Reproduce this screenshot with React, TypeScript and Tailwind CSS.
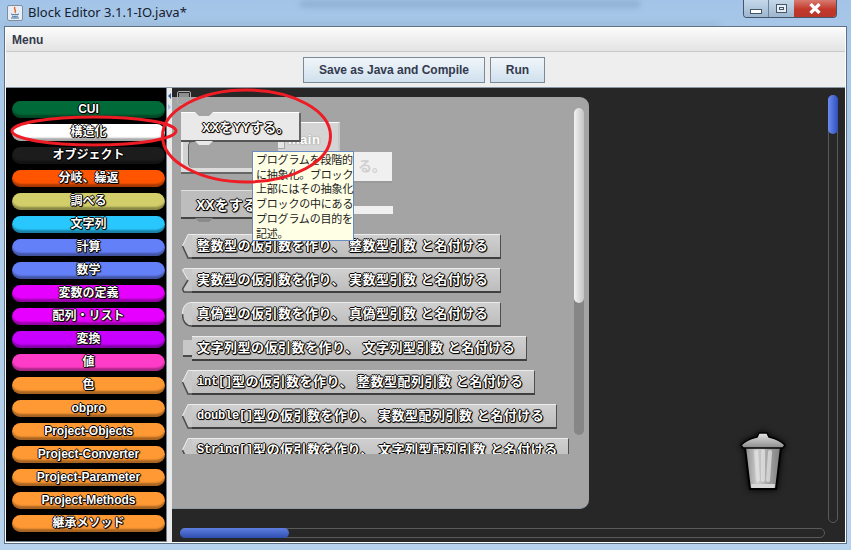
const outline = "[text-shadow:1px_0_0_#000,-1px_0_0_#000,0_1px_0_#000,0_-1px_0_#000,1px_1px_1px_#000]";

const categories: [string, string][] = [
  ["CUI", "bg-[#006a38]"],
  ["構造化", "bg-[#ffffff]"],
  ["オブジェクト", "bg-[#1c1c1c]"],
  ["分岐、繰返", "bg-[#ff5500]"],
  ["調べる", "bg-[#d2cf6a]"],
  ["文字列", "bg-[#28c8ff]"],
  ["計算", "bg-[#6480f8]"],
  ["数学", "bg-[#6480f8]"],
  ["変数の定義", "bg-[#e600ff]"],
  ["配列・リスト", "bg-[#e600ff]"],
  ["変換", "bg-[#c800ff]"],
  ["値", "bg-[#ff3cc8]"],
  ["色", "bg-[#ff9933]"],
  ["obpro", "bg-[#ff9933]"],
  ["Project-Objects", "bg-[#ff9933]"],
  ["Project-Converter", "bg-[#ff9933]"],
  ["Project-Parameter", "bg-[#ff9933]"],
  ["Project-Methods", "bg-[#ff9933]"],
  ["継承メソッド", "bg-[#ff9933]"],
];

type Plug = "arrow" | "notch" | "round" | "square";

const params: { text: string; w: string; plug: Plug }[] = [
  { text: "整数型の仮引数を作り、 整数型引数 と名付ける", w: "w-[319px]", plug: "arrow" },
  { text: "実数型の仮引数を作り、 実数型引数 と名付ける", w: "w-[319px]", plug: "notch" },
  { text: "真偽型の仮引数を作り、 真偽型引数 と名付ける", w: "w-[319px]", plug: "round" },
  { text: "文字列型の仮引数を作り、 文字列型引数 と名付ける", w: "w-[345px]", plug: "square" },
  { text: "int[]型の仮引数を作り、 整数型配列引数 と名付ける", w: "w-[353px]", plug: "arrow" },
  { text: "double[]型の仮引数を作り、 実数型配列引数 と名付ける", w: "w-[375px]", plug: "arrow" },
  { text: "String[]型の仮引数を作り、 文字列型配列引数 と名付ける", w: "w-[387px]", plug: "arrow" },
];

function PlugShape({ kind }: { kind: Plug }) {
  const d =
    kind === "arrow"
      ? "M10 0 L6 0 L0 12 L6 24 L10 24 Z"
      : kind === "notch"
        ? "M10 0 L2 0 L0 2 L6 12 L0 21 L2 24 L10 24 Z"
        : kind === "round"
          ? "M10 0 C3 0 0 6 0 12 C0 18 3 24 10 24 Z"
          : "M10 4 L1 4 L1 20 L10 20 Z";
  return (
    <svg width="10" height="25" viewBox="0 0 10 25" className="shrink-0">
      <path d={d} fill="#c8c8c8" />
      {kind === "arrow" && <path d="M10 0.5 L6 0.5 L0.5 12" stroke="#ececec" fill="none" />}
      {kind === "arrow" && <path d="M0.5 12 L6 24 L10 24" stroke="#4a4a4a" strokeWidth="1.5" fill="none" />}
      {kind === "round" && <path d="M10 0.5 C3 0.5 0.5 6 0.5 12" stroke="#ececec" fill="none" />}
      {kind === "round" && <path d="M0.5 12 C0.5 18 3 24 10 24" stroke="#4a4a4a" strokeWidth="1.5" fill="none" />}
      {kind === "notch" && <path d="M10 0.5 L2 0.5 L0.5 2 L6 12" stroke="#ececec" fill="none" />}
      {kind === "notch" && <path d="M6 12 L0.5 21 L2 24 L10 24" stroke="#4a4a4a" strokeWidth="1.5" fill="none" />}
      {kind === "square" && <path d="M1 20 L10 20" stroke="#4a4a4a" fill="none" strokeWidth="2" />}
    </svg>
  );
}

function BlockText({ text }: { text: string }) {
  return (
    <>
      {text.split(/([A-Za-z\[\]]+)/).map((part, i) =>
        /^[A-Za-z\[\]]+$/.test(part) ? (
          <span key={i} className="text-[12px] tracking-[-0.2px] [font-family:'Liberation_Mono',monospace]">
            {part}
          </span>
        ) : (
          <span key={i}>{part}</span>
        ),
      )}
    </>
  );
}

function ParamBlock({ text, w, plug }: { text: string; w: string; plug: Plug }) {
  return (
    <div className={`flex h-[25px] shrink-0 ${w}`}>
      <PlugShape kind={plug} />
      <div
        className={`flex h-[25px] flex-1 items-center border-t border-r border-b-2 border-t-[#ececec] border-r-[#4f4f4f] border-b-[#3f3f3f] bg-[linear-gradient(180deg,#d0d0d0,#bdbdbd)] pl-[5px] text-[13px] font-bold tracking-[0.5px] whitespace-pre text-white ${outline}`}
      >
        <BlockText text={text} />
      </div>
    </div>
  );
}

function TrashCan() {
  return (
    <svg width="48" height="62" viewBox="0 0 48 62" className="drop-shadow-[0_0_3px_#000]">
      <defs>
        <linearGradient id="can" x1="0" x2="1" y1="0" y2="0">
          <stop offset="0" stopColor="#8c8c8c" />
          <stop offset="0.35" stopColor="#cfcfcf" />
          <stop offset="0.6" stopColor="#a9a9a9" />
          <stop offset="1" stopColor="#7d7d7d" />
        </linearGradient>
        <linearGradient id="lid" x1="0" x2="0" y1="0" y2="1">
          <stop offset="0" stopColor="#e6e6e6" />
          <stop offset="1" stopColor="#8a8a8a" />
        </linearGradient>
      </defs>
      <path d="M6 17 L11 59 L37 59 L42 17 Z" fill="url(#can)" stroke="#000" strokeWidth="2" />
      <path d="M12 54 L36 54 L35.5 58 L12.5 58 Z" fill="#d8d8d8" />
      <path d="M17 22 L19 50 M24 21 L24 50 M31 22 L29 50" stroke="#e4e4e4" strokeWidth="4" strokeLinecap="round" opacity="0.7" />
      <path d="M2 15 C8 9 14 8 18 7 L20 3 L28 3 L30 7 C34 8 40 9 46 15 L44 18 L4 18 Z" fill="url(#lid)" stroke="#000" strokeWidth="1.5" />
    </svg>
  );
}

function TopNotch({ className, fill }: { className: string; fill: string }) {
  return (
    <svg width="18" height="5" viewBox="0 0 18 5" className={`absolute ${className}`}>
      <path d="M0 0 L4 4 L14 4 L18 0 Z" fill={fill} />
    </svg>
  );
}

export default function App() {
  return (
    <div
      className="relative flex h-[550px] w-[851px] flex-col overflow-hidden bg-[linear-gradient(180deg,#a3c4e8_0%,#a9c8e8_6%,#b6d2ec_100%)] px-[5px] pb-[7px] text-[#1f1f1f]"
      style={{ fontFamily: '"Liberation Sans", "Noto Sans CJK JP", sans-serif' }}
    >
      <div className="absolute top-[1px] left-[300px] h-[6px] w-[340px] bg-[#7d9cbd] opacity-60 blur-[3px]" />
      <div className="absolute top-[23px] left-0 h-[4px] w-[720px] bg-[#8aa8c6] opacity-60 blur-[3px]" />

      <div className="relative flex h-[27px] shrink-0 items-start justify-between">
        <div className="flex h-[26px] items-center gap-[5px] pl-[2px]">
          <svg width="16" height="16" viewBox="0 0 16 16">
            <rect x="0.5" y="0.5" width="15" height="15" rx="1.5" fill="#e8eef4" stroke="#7c8ea0" />
            <path d="M8 2 C6 4 10 5 8 8" stroke="#e0662a" strokeWidth="1.5" fill="none" />
            <path d="M4 9 C6 10 10 10 12 9 M5 11 C7 12 9 12 11 11 M4 13 L12 13" stroke="#3f6f9e" strokeWidth="1" fill="none" />
          </svg>
          <span className="text-[13px] text-[#15202c]" style={{ fontFamily: '"Noto Sans", sans-serif' }}>
            Block Editor 3.1.1-IO.java*
          </span>
        </div>
        <div className="mr-[9px] flex h-[18px] w-[94px] overflow-hidden rounded-b-[4px] border border-t-0 border-[#44566a]">
          <div className="flex w-[25px] items-center justify-center border-r border-[#6d8299] bg-[linear-gradient(180deg,#c5d8ea,#9db6ce)]">
            <div className="mt-[5px] h-[5px] w-[12px] border border-[#44566a] bg-white" />
          </div>
          <div className="flex w-[25px] items-center justify-center bg-[linear-gradient(180deg,#c5d8ea,#9db6ce)]">
            <div className="flex h-[9px] w-[11px] items-center justify-center border border-[#44566a] bg-[#e8eef4]">
              <div className="h-[3px] w-[5px] border border-[#44566a]" />
            </div>
          </div>
          <div className="flex flex-1 items-center justify-center bg-[linear-gradient(180deg,#d87a70_0%,#c2392b_55%,#b8362a_100%)]">
            <svg width="14" height="11" viewBox="0 0 14 11">
              <path d="M2.5 1 L11.5 10 M11.5 1 L2.5 10" stroke="#ffffff" strokeWidth="3.2" />
            </svg>
          </div>
        </div>
      </div>

      <div className="relative flex min-h-0 flex-1 flex-col border border-white bg-[#eeeeee] shadow-[0_0_0_1px_#5d7287]">
        <div className="flex h-[24px] shrink-0 items-center border-b border-b-[#c9c9c9] bg-[linear-gradient(180deg,#fbfbfb,#e3e3e3)] pl-[6px] text-[12px] font-bold text-[#333a4d]">
          Menu
        </div>
        <div className="flex h-[36px] shrink-0 items-center justify-center gap-[5px] border-b border-b-[#8a98a6] bg-[#eeeeee] pr-[3px] text-[12px] font-bold text-[#333a4d]">
          <div className="flex h-[26px] w-[182px] items-center justify-center border border-[#7a8a99] bg-[linear-gradient(180deg,#f2f6fa,#cfe0ee)]">
            Save as Java and Compile
          </div>
          <div className="flex h-[26px] w-[55px] items-center justify-center border border-[#7a8a99] bg-[linear-gradient(180deg,#f2f6fa,#cfe0ee)]">
            Run
          </div>
        </div>

        <div className="flex min-h-0 flex-1">
          <div className="flex w-[161px] shrink-0 flex-col gap-[6px] border-r border-b border-r-[#6e7f90] border-b-[#6e7f90] bg-black pt-[13px] pl-[6px]">
            {categories.map(([label, bg]) => (
              <div
                key={label}
                className={`flex h-[17px] w-[153px] shrink-0 items-center justify-center rounded-full pb-[1px] shadow-[inset_0_-4px_2px_-1px_rgba(0,0,0,0.35)] ${bg} text-[12px] leading-none font-bold text-white ${outline}`}
              >
                {label}
              </div>
            ))}
          </div>

          <div className="relative w-[5px] shrink-0 bg-[#e9e9e9]">
            <svg width="5" height="20" viewBox="0 0 5 20" className="absolute top-[4px] left-0">
              <path d="M4 1 L1 4 L4 7 Z" fill="#3a5f9a" />
              <path d="M1 12 L4 15 L1 18 Z" fill="#a8c0e0" />
            </svg>
          </div>

          <div className="relative min-w-0 flex-1 bg-[#272727]">
            <div className="absolute top-[3px] left-[5px] z-10 h-[14px] w-[14px] rounded-[2px] border border-[#b0b0b0]">
              <div className="mx-auto mt-[1px] h-[4px] w-[10px] bg-[#8e8e8e]" />
            </div>

            <div className="relative mt-[9px] h-[412px] w-[417px] overflow-hidden rounded-r-[9px] border-b border-[#8d9aa6] bg-[#a4a4a4]">
              <div className="absolute top-[25px] left-[87px] flex h-[29px] w-[81px] items-center border-t border-r-2 border-t-white border-r-[#c8c8c8] bg-[#d4d4d4] pl-[29px] text-[13px] font-bold text-white">
                <div className="absolute top-[15px] left-[12px] h-[11px] w-[14px] border border-[#a8a8a8] bg-[#e6e6e6]" />
                <span className="pt-[6px] tracking-[0.5px] [text-shadow:0_0_2px_#888]">main</span>
              </div>
              <div className="absolute top-[55px] left-[83px] flex h-[31px] w-[137px] items-center justify-end border-b-2 border-b-[#9a9a9a] bg-[#f0f0f0] pr-[6px] text-[14px] font-bold text-[#cfcfcf]">
                る。
              </div>
              <div className="absolute top-[109px] left-[88px] h-[8px] w-[133px] bg-[#f0f0f0]" />

              <div className="absolute top-[15px] left-[9px] h-[60px] w-[90px] border-l-2 border-l-[#efefef] bg-[#d2d2d2]" />
              <div className="absolute top-[71px] left-[9px] h-[6px] w-[72px] border-b-2 border-[#666] bg-[#dcdcdc]" />
              <div className="absolute top-[44px] left-[16px] h-[27px] w-[90px] rounded-l-[5px] border-t border-l border-[#606060] bg-[#a4a4a4]" />
              <div
                className={`absolute top-[15px] left-[9px] flex h-[30px] w-[120px] items-center rounded-tr-[2px] border-t border-r-2 border-b-2 border-t-white border-r-[#666] border-b-[#555] bg-[#e9e9e9] pt-[2px] pl-[21px] text-[13px] font-bold text-white ${outline}`}
              >
                <TopNotch className="top-[-1px] left-[14px]" fill="#a4a4a4" />
                <TopNotch className="top-[28px] left-[14px]" fill="#e9e9e9" />
                <span className="tracking-[0.1px]">XXをYYする。</span>
              </div>

              <div
                className={`absolute top-[93px] left-[9px] flex h-[29px] w-[72px] items-center border-t border-r border-b-2 border-t-[#e0e0e0] border-r-[#666] border-b-[#444] bg-[#bdbdbd] pt-[2px] pl-[15px] text-[14px] font-bold whitespace-nowrap text-white ${outline}`}
              >
                XXをする
                <TopNotch className="top-[27px] left-[14px]" fill="#8a8a8a" />
              </div>

              <div className="absolute top-[137px] left-[10px] flex h-[220px] w-[394px] flex-col gap-[9px] overflow-hidden">
                {params.map((p) => (
                  <ParamBlock key={p.text} {...p} />
                ))}
              </div>

              <div className="absolute top-[11px] right-[5px] h-[327px] w-[10px] rounded-full bg-[#868686]">
                <div className="h-[195px] rounded-full bg-[linear-gradient(90deg,#f2f2f2,#c4c4c4)]" />
              </div>
            </div>

            <div className="absolute top-[342px] right-[58px]">
              <TrashCan />
            </div>

            <div className="absolute top-[7px] right-[7px] h-[428px] w-[10px] rounded-full border border-[#5a5a5a]">
              <div className="mx-[-1px] mt-[-1px] h-[39px] rounded-full bg-[linear-gradient(90deg,#6d8cf0,#2f4fc0)]" />
            </div>
            <div className="absolute bottom-[4px] left-[8px] h-[10px] w-[645px] rounded-full border border-[#5a5a5a]">
              <div className="mt-[-1px] ml-[-1px] h-[10px] w-[109px] rounded-full bg-[linear-gradient(180deg,#5f7fe0,#2f4fb0)]" />
            </div>
          </div>
        </div>
      </div>

      <div className="absolute top-[151px] left-[252px] z-20 w-[102px] border border-[#6a8cc4] bg-[#ffffe6] pl-[3px] text-[11px] leading-[14.7px] tracking-[-0.2px] text-[#222] [font-family:'Noto_Sans_CJK_JP',sans-serif]">
        {["プログラムを段階的", "に抽象化。ブロック", "上部にはその抽象化", "ブロックの中にある", "プログラムの目的を", "記述。"].map((l) => (
          <div key={l} className="whitespace-nowrap">
            {l}
          </div>
        ))}
      </div>

      <svg className="pointer-events-none absolute inset-0 z-30" width="851" height="550">
        <ellipse cx="94" cy="131" rx="82" ry="14" fill="none" stroke="#ee1c25" strokeWidth="3" />
        <ellipse cx="246.5" cy="136" rx="84" ry="46" fill="none" stroke="#ee1c25" strokeWidth="3" />
      </svg>
    </div>
  );
}
